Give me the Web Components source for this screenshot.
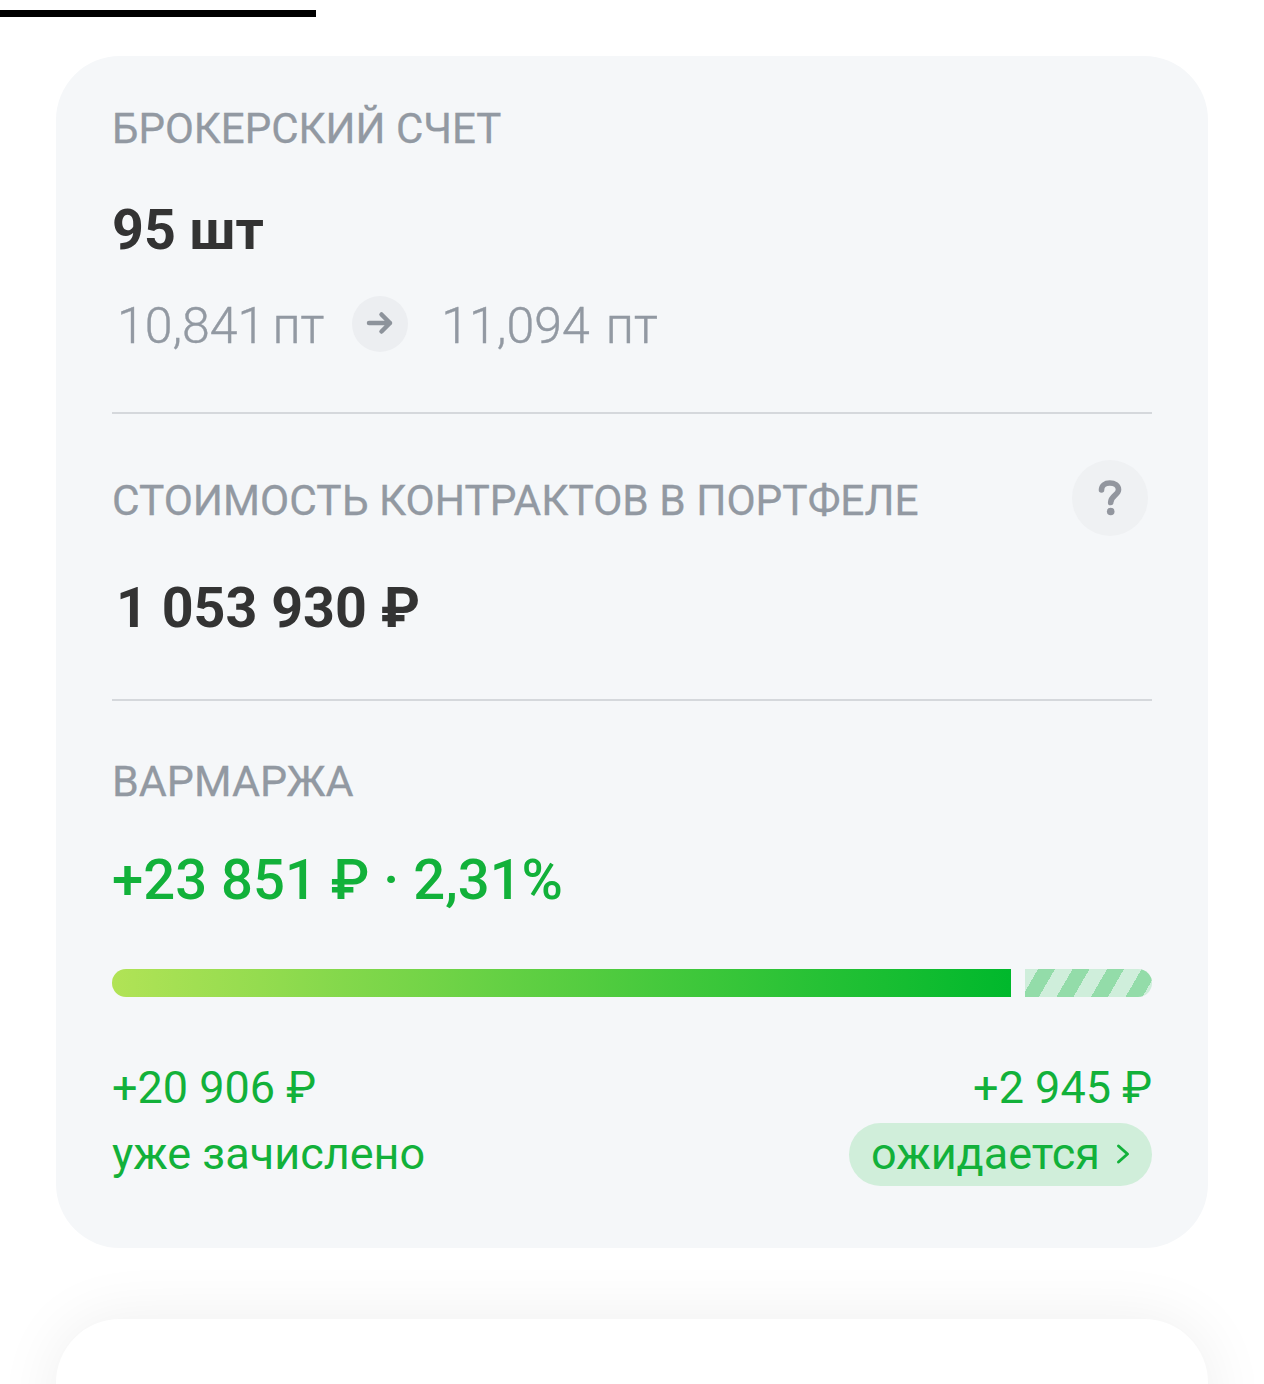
<!DOCTYPE html>
<html lang="ru">
<head>
<meta charset="utf-8">
<title>Брокерский счет</title>
<style>
  html, body { margin: 0; background: #fff; }
  body { height: 1384px; overflow: hidden; font-family: Roboto, "Liberation Sans", sans-serif; }
</style>
</head>
<body>
<progress-strip></progress-strip>
<account-card>
  <card-section first>
    <span slot="label">БРОКЕРСКИЙ СЧЕТ</span>
    <span slot="value">95 шт</span>
    <price-change from="10,841 пт" to="11,094 пт"></price-change>
  </card-section>
  <card-section help>
    <span slot="label">СТОИМОСТЬ КОНТРАКТОВ В ПОРТФЕЛЕ</span>
    <span slot="value">1 053 930 ₽</span>
  </card-section>
  <margin-section></margin-section>
</account-card>
<next-card></next-card>

<script>
  class ProgressStrip extends HTMLElement {
    constructor() {
      super();
      this.attachShadow({ mode: 'open' }).innerHTML = `
        <style>
          :host { display: block; padding-top: 10px; }
          div { width: 316px; height: 7px; background: #000; }
        </style>
        <div></div>
      `;
    }
  }

  class AccountCard extends HTMLElement {
    constructor() {
      super();
      this.attachShadow({ mode: 'open' }).innerHTML = `
        <style>
          :host {
            display: block;
            box-sizing: border-box;
            width: 1152px;
            height: 1192px;
            margin: 39px auto 0;
            padding: 0 56px;
            background: #f5f7f9;
            border-radius: 64px;
          }
        </style>
        <slot></slot>
      `;
    }
  }

  class CardSection extends HTMLElement {
    constructor() {
      super();
      this.attachShadow({ mode: 'open' }).innerHTML = `
        <style>
          :host {
            display: block;
            box-sizing: border-box;
            border-bottom: 2px solid #d5d8dc;
          }
          :host([first]) { height: 358px; padding-top: 34px; }
          :host([help]) { height: 287px; padding-top: 46px; }
          .head {
            display: flex;
            align-items: center;
            justify-content: space-between;
            height: 76px;
            color: #9299a2;
            font-size: 42.4px;
            line-height: 76px;
            -webkit-text-stroke: 0.3px #9299a2;
          }
          :host([first]) .head { font-size: 42px; }
          .head .title { padding-top: 5px; }
          :host([first]) .head .title { padding-top: 2px; }
          .value {
            color: #333;
            font-size: 55.6px;
            font-weight: 700;
            line-height: 64px;
            margin-top: 32px;
          }
          :host([help]) .value { margin-top: 40px; padding-left: 4px; }
          .help {
            display: none;
            width: 76px;
            height: 76px;
            margin-right: 4px;
            border-radius: 50%;
            background: #eff1f3;
            align-items: center;
            justify-content: center;
          }
          :host([help]) .help { display: flex; }
        </style>
        <div class="head">
          <span class="title"><slot name="label"></slot></span>
          <span class="help">
            <svg width="24" height="36" viewBox="0 0 24 36" fill="none">
              <path d="M3.500 10C3.500 5.500 7 3 11.800 3S20.500 5.600 20.500 9.800C20.500 15 13 15.500 12.700 22.500" stroke="#92969e" stroke-width="5.600" stroke-linecap="round"/>
              <circle cx="12.700" cy="31.500" r="3.800" fill="#92969e"/>
            </svg>
          </span>
        </div>
        <div class="value"><slot name="value"></slot></div>
        <slot></slot>
      `;
    }
  }

  class PriceChange extends HTMLElement {
    constructor() {
      super();
      this.attachShadow({ mode: 'open' }).innerHTML = `
        <style>
          :host {
            display: flex;
            align-items: center;
            height: 56px;
            margin-top: 34px;
            padding-left: 5px;
            color: #9299a2;
            font-size: 50px;
            font-weight: 300;
            -webkit-text-stroke: 0.4px #9299a2;
            white-space: nowrap;
          }
          .from { word-spacing: -5px; padding-top: 4px; }
          .to { word-spacing: 4px; padding-top: 4px; }
          .arrow {
            display: flex;
            align-items: center;
            justify-content: center;
            width: 56px;
            height: 56px;
            margin: 0 33px 0 28px;
            border-radius: 50%;
            background: #eceef1;
          }
          svg { margin-top: -2px; }
        </style>
        <span class="from">${this.getAttribute('from')}</span>
        <span class="arrow">
          <svg width="28" height="24" viewBox="0 0 28 24" fill="none" stroke="#8d939b" stroke-width="4.500" stroke-linecap="round" stroke-linejoin="round">
            <path d="M3 12h21M15.500 3.500l8.500 8.500-8.500 8.500"/>
          </svg>
        </span>
        <span class="to">${this.getAttribute('to')}</span>
      `;
    }
  }

  class MarginSection extends HTMLElement {
    constructor() {
      super();
      this.attachShadow({ mode: 'open' }).innerHTML = `
        <style>
          :host { display: block; padding-top: 42px; color: #12b13a; }
          .label { height: 76px; line-height: 76px; color: #9299a2; font-size: 43px; -webkit-text-stroke: 0.3px #9299a2; }
          .total { margin-top: 29px; font-size: 56.2px; font-weight: 500; line-height: 64px; }
          .bar { display: flex; gap: 14px; height: 28px; margin-top: 57px; }
          .done {
            flex: 1;
            border-radius: 14px 0 0 14px;
            background: linear-gradient(90deg, #b1e356, #00b82c);
          }
          .wait {
            width: 127px;
            border-radius: 0 14px 14px 0;
            background: repeating-linear-gradient(120deg, #cfeedb 0 11.300px, #93dca9 11.300px 26px, #cfeedb 26px 29.900px);
          }
          .amounts { display: grid; grid-template-columns: 1fr auto; margin-top: 58px; font-size: 45px; line-height: 66px; }
          .right { text-align: right; }
          .pill {
            display: inline-flex;
            align-items: center;
            gap: 16px;
            height: 63px;
            padding: 0 22px 0 22px;
            border-radius: 32px;
            background: #d0eeda;
          }
        </style>
        <div class="label">ВАРМАРЖА</div>
        <div class="total">+23 851 ₽ · 2,31%</div>
        <div class="bar"><div class="done"></div><div class="wait"></div></div>
        <div class="amounts">
          <span>+20 906 ₽</span>
          <span class="right">+2 945 ₽</span>
          <span>уже зачислено</span>
          <span class="right">
            <span class="pill">ожидается
              <svg width="14" height="22" viewBox="0 0 14 22" fill="none" stroke="#12b13a" stroke-width="3" stroke-linecap="round" stroke-linejoin="round"><path d="M2.500 3l9 8-9 8"/></svg>
            </span>
          </span>
        </div>
      `;
    }
  }

  class NextCard extends HTMLElement {
    constructor() {
      super();
      this.attachShadow({ mode: 'open' }).innerHTML = `
        <style>
          :host { display: block; height: 136px; overflow: hidden; padding-top: 71px; box-sizing: border-box; }
          div {
            width: 1152px;
            height: 200px;
            margin: 0 auto;
            background: #fff;
            border-radius: 64px;
            box-shadow: 0 0 64px rgba(0, 0, 0, 0.07);
          }
        </style>
        <div></div>
      `;
    }
  }

  customElements.define('progress-strip', ProgressStrip);
  customElements.define('account-card', AccountCard);
  customElements.define('card-section', CardSection);
  customElements.define('price-change', PriceChange);
  customElements.define('margin-section', MarginSection);
  customElements.define('next-card', NextCard);
</script>
</body>
</html>
